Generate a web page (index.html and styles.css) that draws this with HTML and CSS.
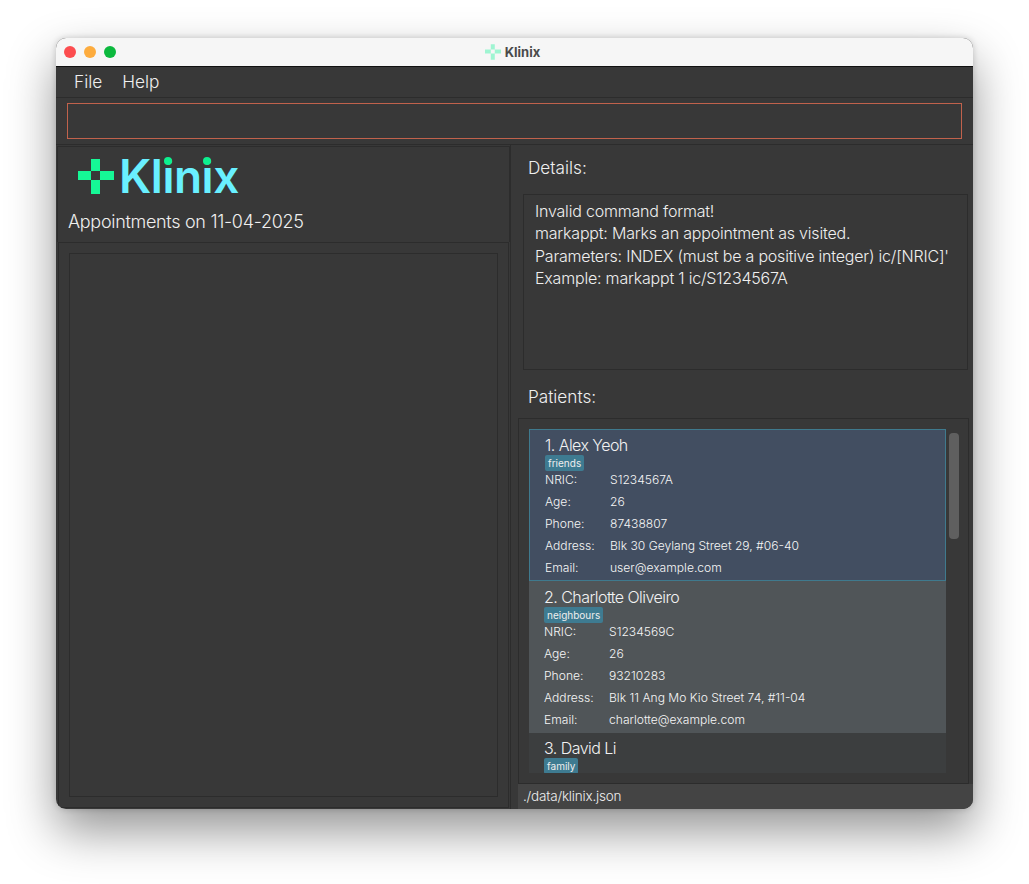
FILE: index.html
```html
<!DOCTYPE html>
<html lang="en">

<head>
    <meta charset="UTF-8" />
    <meta name="viewport" content="width=device-width, initial-scale=1.0" />
    <title>Klinix</title>
    <link rel="stylesheet" href="styles.css">
</head>

<body>
    <div class="window">
        <div class="titlebar">
            <div class="lights">
                <span class="light red"></span>
                <span class="light yellow"></span>
                <span class="light green"></span>
            </div>
            <div class="title">
                <svg class="title-icon" viewBox="0 0 36 35">
                    <path d="M13 0h9v12h-9zM0 12h13v9H0zM22 12h14v9H22zM13 21h9v14h-9z" fill="#9ff5d2" />
                </svg>
                <span>Klinix</span>
            </div>
        </div>

        <div class="menubar">
            <span>File</span>
            <span>Help</span>
        </div>

        <div class="command">
            <div class="command-box"></div>
        </div>

        <div class="main">
            <div class="left">
                <div class="left-head">
                    <div class="logo">
                        <svg class="logo-icon" viewBox="0 0 36 35">
                            <path d="M13 0h9v12h-9zM0 12h13v9H0zM22 12h14v9H22zM13 21h9v14h-9z" fill="#16f896" />
                        </svg>
                        <span class="logo-text">Kl<span class="logo-i">i</span>n<span class="logo-i">i</span>x</span>
                    </div>
                    <div class="appt-title">Appointments on 11-04-2025</div>
                </div>
                <div class="appt-pane">
                    <div class="appt-list"></div>
                </div>
            </div>

            <div class="right">
                <div class="section-label details-label">Details:</div>
                <div class="details">
                    Invalid command format!<br>
                    markappt: Marks an appointment as visited.<br>
                    Parameters: INDEX (must be a positive integer) ic/[NRIC]'<br>
                    Example: markappt 1 ic/S1234567A
                </div>
                <div class="section-label patients-label">Patients:</div>
                <div class="patients">
                    <div class="patient-list">
                        <div class="card selected">
                            <div class="name">1. Alex Yeoh</div>
                            <span class="tag">friends</span>
                            <div class="row"><span>NRIC:</span><span>S1234567A</span></div>
                            <div class="row"><span>Age:</span><span>26</span></div>
                            <div class="row"><span>Phone:</span><span>87438807</span></div>
                            <div class="row"><span>Address:</span><span>Blk 30 Geylang Street 29, #06-40</span></div>
                            <div class="row"><span>Email:</span><span>user@example.com</span></div>
                        </div>
                        <div class="card even">
                            <div class="name">2. Charlotte Oliveiro</div>
                            <span class="tag">neighbours</span>
                            <div class="row"><span>NRIC:</span><span>S1234569C</span></div>
                            <div class="row"><span>Age:</span><span>26</span></div>
                            <div class="row"><span>Phone:</span><span>93210283</span></div>
                            <div class="row"><span>Address:</span><span>Blk 11 Ang Mo Kio Street 74, #11-04</span></div>
                            <div class="row"><span>Email:</span><span>charlotte@example.com</span></div>
                        </div>
                        <div class="card odd">
                            <div class="name">3. David Li</div>
                            <span class="tag">family</span>
                        </div>
                    </div>
                    <div class="scrollbar"></div>
                </div>
                <div class="status">./data/klinix.json</div>
            </div>
        </div>
    </div>
</body>

</html>
```

FILE: styles.css
```css
* {
    margin: 0;
    padding: 0;
    box-sizing: border-box;
}

html,
body {
    height: 100%;
    background-color: white;
    overflow: hidden;
}

body {
    padding: 38px 56px 0;
    font-family: Inter, "Liberation Sans", sans-serif;
    color: #efefef;
}

.window {
    width: 917px;
    height: 771px;
    background-color: #383838;
    border-radius: 10px;
    box-shadow: 0 22px 48px rgba(0, 0, 0, 0.42), 0 0 6px rgba(0, 0, 0, 0.18);
    display: flex;
    flex-direction: column;
    overflow: hidden;
}

.titlebar {
    height: 29px;
    flex: none;
    background-color: #f6f6f6;
    border-bottom: 1px solid #111;
    position: relative;
    display: flex;
    align-items: center;
    justify-content: center;
}

.lights {
    position: absolute;
    left: 8px;
    top: 8px;
    display: flex;
    gap: 8px;
}

.light {
    width: 12px;
    height: 12px;
    border-radius: 50%;
}

.red {
    background-color: #fc4d4f;
}

.yellow {
    background-color: #fdac3e;
}

.green {
    background-color: #0cb93e;
}

.title {
    display: flex;
    align-items: center;
    gap: 4px;
    padding-right: 4px;
    font-size: 13px;
    font-weight: 700;
    color: #4a4a4a;
}

.title-icon {
    width: 16px;
    height: 16px;
}

.menubar {
    height: 31px;
    flex: none;
    display: flex;
    align-items: center;
    gap: 20px;
    padding: 0 0 2px 18px;
    border-bottom: 1px solid #2c2c2c;
    font-size: 17.3px;
    font-weight: 300;
}

.command {
    height: 47px;
    flex: none;
    padding: 5px 11px 0;
    border-bottom: 1px solid #2c2c2c;
}

.command-box {
    height: 36px;
    border: 1px solid #c1624c;
}

.main {
    flex: 1;
    min-height: 0;
    display: flex;
}

.left {
    width: 455px;
    flex: none;
    padding: 1px 0 1px 1px;
    border-right: 1px solid #2c2c2c;
    display: flex;
    flex-direction: column;
}

.left-head {
    height: 96px;
    flex: none;
    border: 1px solid #2c2c2c;
    border-bottom: none;
    padding: 11px 0 0 10px;
}

.logo {
    display: flex;
    align-items: center;
    gap: 5px;
    padding-left: 10px;
    height: 36px;
}

.logo-icon {
    width: 36px;
    height: 35px;
    flex: none;
}

.logo-text {
    font-size: 46px;
    line-height: 36px;
    font-weight: 600;
    letter-spacing: -0.5px;
    color: #69f0ff;
}

.logo-i {
    position: relative;
}

/* green dot sits over the dot of the i */
.logo-i::after {
    content: "";
    position: absolute;
    left: 50%;
    top: 9px;
    width: 8px;
    height: 8px;
    margin-left: -4px;
    border-radius: 50%;
    background-color: #0df08f;
}

.appt-title {
    margin-top: 17px;
    font-size: 18px;
    font-weight: 300;
    letter-spacing: -0.3px;
    white-space: nowrap;
}

.appt-pane {
    flex: 1;
    border: 1px solid #2c2c2c;
    margin: 0 1px;
    padding: 10px 10px 10px;
}

.appt-list {
    height: 100%;
    border: 1px solid #2c2c2c;
}

.right {
    flex: 1;
    min-width: 0;
    display: flex;
    flex-direction: column;
}

.section-label {
    font-size: 17.2px;
    font-weight: 300;
    padding-left: 17px;
    flex: none;
}

.details-label {
    height: 49px;
    padding-top: 12px;
}

.details {
    height: 176px;
    flex: none;
    margin: 0 5px 0 12px;
    border: 1px solid #2c2c2c;
    padding: 5px 11px;
    font-size: 16px;
    line-height: 22.3px;
    font-weight: 300;
    letter-spacing: -0.2px;
    white-space: nowrap;
}

.patients-label {
    height: 48px;
    padding-top: 16px;
}

.patients {
    height: 366px;
    flex: none;
    margin-left: 7px;
    margin-right: 4px;
    border: 1px solid #2c2c2c;
    padding: 10px 0 0 10px;
    position: relative;
}

.patient-list {
    width: 417px;
    height: 344px;
    overflow: hidden;
}

.scrollbar {
    position: absolute;
    right: 9px;
    top: 14px;
    width: 10px;
    height: 106px;
    border-radius: 4px;
    background-color: #5f5f5f;
}

.card {
    height: 152px;
    padding: 7px 15px 0;
    font-weight: 300;
}

.selected {
    background-color: #424e61;
    border: 1px solid #3f7a8e;
    padding: 6px 15px 0;
}

.even {
    background-color: #505558;
}

.odd {
    background-color: #3c3e3f;
    padding-top: 6px;
}

.name {
    font-size: 16px;
    line-height: 19px;
    letter-spacing: -0.55px;
    color: #f2f2f2;
}

.tag {
    display: block;
    width: fit-content;
    height: 16px;
    padding: 0 3px;
    border-radius: 2px;
    background-color: #3e7b91;
    font-size: 10px;
    line-height: 16px;
    font-weight: 400;
    color: #eee;
}

.row {
    display: flex;
    height: 22px;
    font-size: 12.1px;
    line-height: 17px;
    font-weight: 300;
    color: #f6f6f6;
    white-space: nowrap;
}

.row span:first-child {
    width: 65px;
    flex: none;
}

.status {
    flex: 1;
    margin-left: 7px;
    padding: 4px 0 0 5px;
    background-color: #444;
    font-size: 13.5px;
    font-weight: 300;
    letter-spacing: -0.2px;
}
```
